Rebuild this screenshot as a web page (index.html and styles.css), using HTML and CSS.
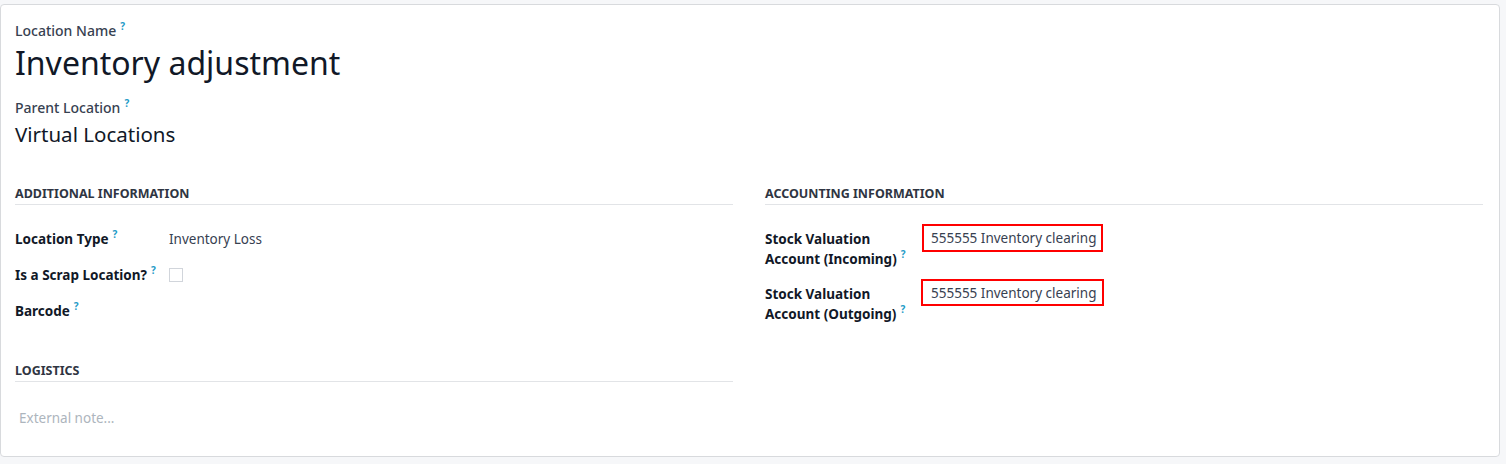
FILE: index.html
```html
<!DOCTYPE html>
<html lang="en">
<head>
    <meta charset="UTF-8">
    <meta name="viewport" content="width=device-width, initial-scale=1.0">
    <title>Inventory adjustment</title>
    <link rel="stylesheet" href="styles.css">
</head>
<body>
    <div class="sheet">
        <div class="title-block">
            <div class="top-label">Location Name<sup class="help">?</sup></div>
            <h1 class="name">Inventory adjustment</h1>
            <div class="top-label">Parent Location<sup class="help">?</sup></div>
            <div class="parent">Virtual Locations</div>
        </div>

        <div class="groups">
            <div class="column">
                <div class="group">
                    <div class="group-title">Additional Information</div>
                    <div class="fields">
                        <div class="field-label">Location Type<sup class="help">?</sup></div>
                        <div class="field-value">Inventory Loss</div>

                        <div class="field-label">Is a Scrap Location?<sup class="help">?</sup></div>
                        <div class="field-value"><span class="checkbox"></span></div>

                        <div class="field-label">Barcode<sup class="help">?</sup></div>
                        <div class="field-value"></div>
                    </div>
                </div>

                <div class="group logistics">
                    <div class="group-title">Logistics</div>
                    <div class="note">External note...</div>
                </div>
            </div>

            <div class="column">
                <div class="group">
                    <div class="group-title">Accounting Information</div>
                    <div class="fields accounting">
                        <div class="field-label">Stock Valuation<br>Account (Incoming)<sup class="help">?</sup></div>
                        <div class="field-value"><span class="account account-in">555555 Inventory clearing</span></div>

                        <div class="field-label">Stock Valuation<br>Account (Outgoing)<sup class="help">?</sup></div>
                        <div class="field-value"><span class="account account-out">555555 Inventory clearing</span></div>
                    </div>
                </div>
            </div>
        </div>
    </div>
</body>
</html>
```

FILE: styles.css
```css
body {
    margin: 0;
    background-color: #f6f7f9;
    font-family: "Noto Sans", sans-serif;
    font-size: 13.5px;
    color: #374151;
}

.sheet {
    width: 1500px;
    height: 453px;
    box-sizing: border-box;
    margin-top: 4px;
    padding: 16px 16px 0 14px;
    background-color: white;
    border: 1px solid #d8dadd;
    border-radius: 4px;
}

.help {
    color: #1f9bc7;
    font-size: 10px;
    font-weight: bold;
    margin-left: 4px;
    vertical-align: 6px;
    line-height: 0;
}

.top-label {
    font-size: 14px;
    font-weight: 500;
    color: #374151;
    line-height: 20px;
}

.name {
    margin: 0 0 13px 0;
    font-size: 32px;
    font-weight: normal;
    color: #111827;
    line-height: 44px;
}

.parent {
    font-size: 20.5px;
    color: #111827;
    line-height: 32px;
}

.groups {
    display: grid;
    grid-template-columns: 1fr 1fr;
    column-gap: 32px;
    margin-top: 35px;
}

.group-title {
    font-size: 12.5px;
    font-weight: bold;
    text-transform: uppercase;
    color: #2f3542;
    line-height: 18px;
    padding-bottom: 1px;
    border-bottom: 1px solid #e2e4e7;
}

.fields {
    display: grid;
    grid-template-columns: 154px 1fr;
    row-gap: 16px;
    margin-top: 24px;
}

.field-label {
    font-weight: bold;
    color: #111827;
    line-height: 20px;
}

.field-value {
    line-height: 20px;
    min-height: 20px;
}

.checkbox {
    display: inline-block;
    width: 12px;
    height: 12px;
    border: 1px solid #d1d5db;
    vertical-align: -2px;
}

.logistics {
    margin-top: 41px;
}

.note {
    margin: 26px 0 0 4px;
    color: #adb5bd;
    line-height: 20px;
}

.accounting {
    grid-template-columns: 157px 1fr;
    row-gap: 15px;
}

.account {
    display: block;
    width: fit-content;
    margin-top: -5px;
    padding: 2px 5px 2px 7px;
    border: 2px solid #ff0000;
    color: #374151;
    line-height: 20px;
}

.account-out {
    margin-left: -1px;
    padding-left: 8px;
    padding-right: 6px;
    padding-bottom: 1px;
}
```
